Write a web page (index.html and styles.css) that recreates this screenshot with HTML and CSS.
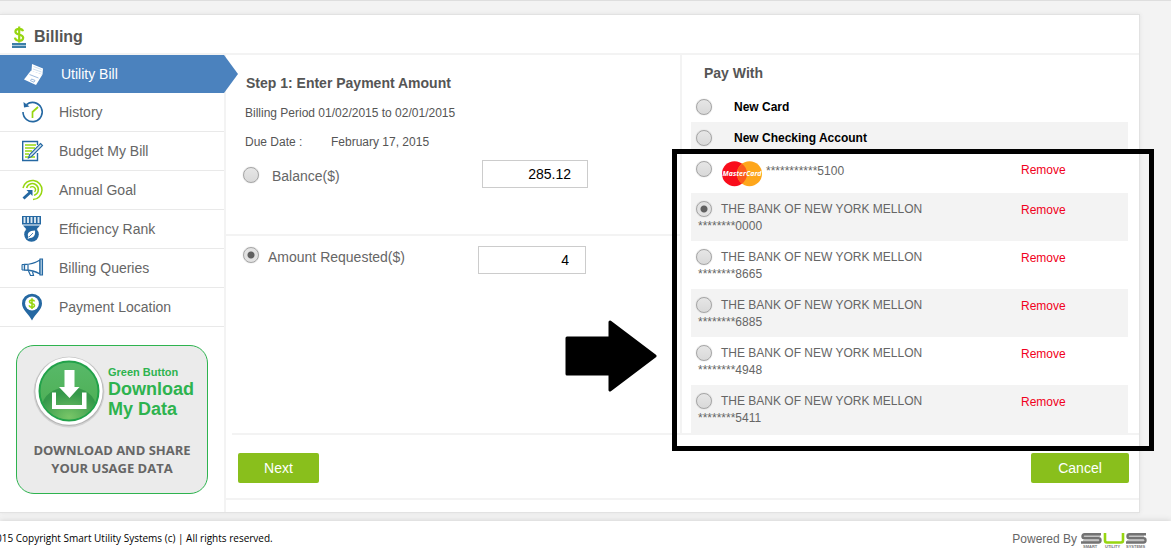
FILE: index.html
```html
<!DOCTYPE html>
<html lang="en">
<head>
<meta charset="utf-8">
<title>Billing</title>
<link rel="stylesheet" href="styles.css">
</head>
<body>
<div class="panel">
  <header class="panel-header">
    <svg class="title-icon" width="14" height="22" viewBox="0 0 14 22" aria-hidden="true">
      <path d="M11 5.2C10.500 3.200 9 2.800 7.200 2.800C4.800 2.800 3.400 4 3.400 5.700C3.400 9.600 11.200 7.400 11.200 11.800C11.200 13.700 9.500 14.800 7.300 14.800C5 14.800 3.300 13.800 2.900 11.600M7.200.5V16.500" fill="none" stroke="#97d610" stroke-width="2.200"/>
      <path d="M0 18h14M0 21h14" stroke="#3d7fa8" stroke-width="2"/>
      <path d="M0 19.500h14" stroke="#a5c6da" stroke-width="1"/>
    </svg>
    <h1>Billing</h1>
  </header>
  <div class="panel-body">
    <aside class="sidebar">
      <nav>
        <a class="nav-item active" href="#">
          <svg class="nav-icon" width="24" height="28" viewBox="0 0 24 28" aria-hidden="true">
            <path d="M11 4L22 8.500L21.500 14.500L10.500 11Z" fill="#fff"/>
            <path d="M10 10.500L21.500 14.500L15 25L3 19.500Z" fill="#fff"/>
            <path d="M12.500 6.500l8 3M12 9l8.500 3" stroke="#c3d5ea" stroke-width=".8"/>
            <path d="M8.500 14.500l9 3.500M10.500 19l3.500 1.400l-1 1.800l-3.500-1.500z" fill="none" stroke="#86abd6" stroke-width=".8"/>
          </svg>
          <span>Utility Bill</span>
          <svg class="nav-tip" width="14" height="38" viewBox="0 0 14 38" aria-hidden="true"><path d="M0 0L14 19L0 38Z" fill="#4b82be"/></svg>
        </a>
        <a class="nav-item" href="#">
          <svg class="nav-icon" width="24" height="28" viewBox="0 0 24 28" aria-hidden="true">
            <path d="M5.500 6.600A9.600 9.600 0 1 1 2 14" fill="none" stroke="#2568a2" stroke-width="1.600"/>
            <path d="M2.500 4L3 9.500L8.500 8.500Z" fill="#2568a2"/>
            <path d="M17 9L11.500 14V20" fill="none" stroke="#97d610" stroke-width="1.700"/>
          </svg>
          <span>History</span>
        </a>
        <a class="nav-item" href="#">
          <svg class="nav-icon" width="24" height="28" viewBox="0 0 24 28" aria-hidden="true">
            <path d="M16.500 8V4.500H1.700V23.500H16.500V16" fill="none" stroke="#2568a2" stroke-width="1.400"/>
            <path d="M4 8h11M4 11h10M4 14h7M4 17h4M4 20h10" stroke="#97d610" stroke-width="1.400"/>
            <path d="M19.500 6.500l2 2L10.500 19.500L7.500 21l1.200-3.500z" fill="#d3e3ef" stroke="#2568a2" stroke-width="1.100"/>
          </svg>
          <span>Budget My Bill</span>
        </a>
        <a class="nav-item" href="#">
          <svg class="nav-icon" width="24" height="28" viewBox="0 0 24 28" aria-hidden="true">
            <path d="M2 12A9.600 9.600 0 1 1 12 23.600M5.600 12A6 6 0 1 1 13 19.400" fill="none" stroke="#97d610" stroke-width="1.500"/>
            <path d="M9 11.500A3 3 0 1 1 13.500 16" fill="none" stroke="#97d610" stroke-width="1.300"/>
            <path d="M5.500 14H11.500V20L9.500 18L3.500 23.500L1.500 21.500L7.500 16Z" fill="#2568a2"/>
          </svg>
          <span>Annual Goal</span>
        </a>
        <a class="nav-item" href="#">
          <svg class="nav-icon" width="24" height="28" viewBox="0 0 24 28" aria-hidden="true">
            <path d="M1 1H20V9.500H1Z" fill="#2568a2"/>
            <path d="M3.500 2v6M7 2v6M10.500 2v6M14 2v6M17.500 2v6" stroke="#dce8f1" stroke-width="1.900"/>
            <path d="M2 10.500H19L15 15H6Z" fill="#2568a2"/>
            <circle cx="10.500" cy="19.500" r="7.300" fill="#2568a2"/>
            <path d="M14 15.500C8 15.500 5.500 18.500 7.500 22L6.500 24L9 23C13.500 23 14.500 19 14 15.500Z" fill="#fff"/>
            <path d="M8 22L12 18" stroke="#2568a2" stroke-width=".8"/>
          </svg>
          <span>Efficiency Rank</span>
        </a>
        <a class="nav-item" href="#">
          <svg class="nav-icon" width="24" height="28" viewBox="0 0 24 28" aria-hidden="true">
            <path d="M3.500 10.500C9 10.500 14 9 19 6V20C14 17 9 16 3.500 16Z" fill="none" stroke="#2568a2" stroke-width="1.300"/>
            <path d="M1 10.500h2.500v5.500H1z" fill="#c3d8e8" stroke="#2568a2" stroke-width="1"/>
            <path d="M19 5h2.500v16H19z" fill="#a9c7dd" stroke="#2568a2" stroke-width="1.100"/>
            <path d="M7.500 17L9.500 21.500H12.500L11.500 17.500M7 11v5" fill="none" stroke="#2568a2" stroke-width="1.200"/>
          </svg>
          <span>Billing Queries</span>
        </a>
        <a class="nav-item" href="#">
          <svg class="nav-icon" width="24" height="28" viewBox="0 0 24 28" aria-hidden="true">
            <path d="M11 27.500C8 21 1 17 1 10.500A10 9.800 0 0 1 21 10.500C21 17 14 21 11 27.500Z" fill="#2568a2"/>
            <circle cx="11" cy="10.500" r="6.900" fill="#fff"/>
            <path d="M13.500 8.500C13 6.500 8.500 6.500 8.500 8.800C8.500 11 13.500 10 13.500 12.500C13.500 15 8.500 14.800 8.300 12.300M11 5.300V16" fill="none" stroke="#97d610" stroke-width="1.600"/>
          </svg>
          <span>Payment Location</span>
        </a>
      </nav>
      <a class="download" href="#">
        <span class="download-top">
          <svg width="72" height="72" viewBox="0 0 72 72" aria-hidden="true">
            <defs>
              <linearGradient id="ball" x1="0" y1="0" x2="0" y2="1"><stop offset="0" stop-color="#58b969"/><stop offset="1" stop-color="#4bad50"/></linearGradient>
              <radialGradient id="glow" cx=".5" cy=".75" r=".6"><stop offset="0" stop-color="#79c668"/><stop offset="1" stop-color="#35984a"/></radialGradient>
              <clipPath id="disc"><circle cx="36" cy="35" r="28.500"/></clipPath>
            </defs>
            <circle cx="36" cy="36" r="35.500" fill="#d2d2d2"/>
            <circle cx="36" cy="35.500" r="34.500" fill="#b5b5b5"/>
            <circle cx="36" cy="35" r="33.700" fill="#fff"/>
            <circle cx="36" cy="35" r="29.500" fill="url(#ball)" stroke="#22a24a" stroke-width="2"/>
            <ellipse cx="36" cy="51" rx="27" ry="20" fill="url(#glow)" clip-path="url(#disc)"/>
            <path d="M31.500 14H41.500V31H46.500L36.500 42L26 31H31.500Z" fill="#fff"/>
            <path d="M19 36.500H23V49H49V36.500H53.500V53H19Z" fill="#fff"/>
          </svg>
          <span class="download-name"><small>Green Button</small><strong>Download<br>My Data</strong></span>
        </span>
        <span class="download-text">DOWNLOAD AND SHARE<br>YOUR USAGE DATA</span>
      </a>
    </aside>
    <main class="main">
      <form class="payment">
        <div class="columns">
          <section class="amount">
            <div class="amount-current">
              <h2>Step 1: Enter Payment Amount</h2>
              <p>Billing Period 01/02/2015 to 02/01/2015</p>
              <p class="due"><span>Due Date :</span><span>February 17, 2015</span></p>
              <div class="field">
                <input type="radio" name="amount" id="balance">
                <label for="balance">Balance($)</label>
                <input class="money" type="text" value="285.12" aria-label="Balance amount">
              </div>
            </div>
            <div class="amount-other">
              <div class="field requested">
                <input type="radio" name="amount" id="requested" checked>
                <label for="requested">Amount Requested($)</label>
                <input class="money" type="text" value="4" aria-label="Requested amount">
              </div>
            </div>
            <svg class="arrow" width="92" height="72" viewBox="0 0 92 72" aria-hidden="true"><path d="M2 18H45V2L90 36L45 70V54H2Z" stroke="#000" stroke-width="3" stroke-linejoin="round"/></svg>
          </section>
          <section class="pay">
            <h2>Pay With</h2>
            <ul class="methods">
              <li class="new"><input type="radio" name="method" id="m1"><label for="m1">New Card</label></li>
              <li class="new"><input type="radio" name="method" id="m2"><label for="m2">New Checking Account</label></li>
              <li class="card">
                <input type="radio" name="method" id="m3">
                <label for="m3">
                  <svg width="40" height="26" viewBox="0 0 40 26" aria-hidden="true">
                    <circle cx="12.500" cy="12.700" r="12.500" fill="#f90d1b"/>
                    <circle cx="27.500" cy="12.700" r="12.500" fill="#fea61b"/>
                    <path d="M20 2.700A12.500 12.500 0 0 1 20 22.700A12.500 12.500 0 0 1 20 2.700Z" fill="#fb5a1c"/>
                    <text class="card-brand" x="20" y="15" text-anchor="middle">MasterCard</text>
                  </svg>
                  <span>***********5100</span>
                </label>
                <a class="remove" href="#">Remove</a>
              </li>
              <li><input type="radio" name="method" id="m4" checked><label for="m4">THE BANK OF NEW YORK MELLON</label><a class="remove" href="#">Remove</a><span class="digits">********0000</span></li>
              <li><input type="radio" name="method" id="m5"><label for="m5">THE BANK OF NEW YORK MELLON</label><a class="remove" href="#">Remove</a><span class="digits">********8665</span></li>
              <li><input type="radio" name="method" id="m6"><label for="m6">THE BANK OF NEW YORK MELLON</label><a class="remove" href="#">Remove</a><span class="digits">********6885</span></li>
              <li><input type="radio" name="method" id="m7"><label for="m7">THE BANK OF NEW YORK MELLON</label><a class="remove" href="#">Remove</a><span class="digits">********4948</span></li>
              <li><input type="radio" name="method" id="m8"><label for="m8">THE BANK OF NEW YORK MELLON</label><a class="remove" href="#">Remove</a><span class="digits">********5411</span></li>
            </ul>
            <div class="highlight"></div>
          </section>
        </div>
        <div class="actions">
          <button type="button" class="next">Next</button>
          <button type="button" class="cancel">Cancel</button>
        </div>
      </form>
    </main>
  </div>
</div>
<footer class="footer">
  <p class="copyright">015 Copyright Smart Utility Systems (c) | All rights reserved.</p>
  <p class="powered">Powered By
    <svg width="66" height="16" viewBox="0 0 66 16" role="img" aria-label="SUS">
      <path d="M2 3h17M2 8h17" stroke="#c4c4c4" stroke-width="2"/>
      <path d="M46 3h17M46 8h17" stroke="#c4c4c4" stroke-width="2"/>
      <path d="M20 1.300H3.500Q1.500 1.300 1.500 3.300Q1.500 5.300 3.500 5.300H17.500Q19.500 5.300 19.500 7.300Q19.500 9.500 17.500 9.500H0" fill="none" stroke="#737373" stroke-width="2.400"/>
      <path d="M24 0V7.500Q24 9.500 26 9.500H40Q42 9.500 42 7.500V0" fill="none" stroke="#97d610" stroke-width="2.600"/>
      <path d="M65 1.300H48.500Q46.500 1.300 46.500 3.300Q46.500 5.300 48.500 5.300H62.500Q64.500 5.300 64.500 7.300Q64.500 9.500 62.500 9.500H45" fill="none" stroke="#737373" stroke-width="2.400"/>
      <text class="logo-caption" x="2" y="15">SMART</text>
      <text class="logo-caption" x="24" y="15">UTILITY</text>
      <text class="logo-caption" x="45" y="15">SYSTEMS</text>
    </svg>
  </p>
</footer>
</body>
</html>
```
FILE: styles.css
```css
* { box-sizing: border-box; }
body {
  margin: 0;
  min-height: 100vh;
  display: flex;
  flex-direction: column;
  border-top: 1px solid #dedede;
  background: #f3f3f3;
  color: #666;
  font: 13px/17px "Liberation Sans", Arial, sans-serif;
  overflow-x: hidden;
}
h1, h2, p, ul { margin: 0; padding: 0; }
ul { list-style: none; }
a { text-decoration: none; }

.panel {
  margin: 13px 31px 8px 0;
  background: #fff;
  border: 1px solid #e2e2e2;
  border-left: 0;
  box-shadow: 0 0 4px #e2e2e2;
}
.panel-header {
  display: flex;
  align-items: center;
  gap: 8px;
  height: 40px;
  padding: 6px 12px 0;
  border-bottom: 2px solid #f3f3f3;
}
h1 { font-size: 16px; line-height: 20px; color: #555; }
.panel-body { display: flex; }

.sidebar {
  flex: 0 0 226px;
  border-right: 2px solid #f3f3f3;
}
.nav-item {
  position: relative;
  display: flex;
  align-items: center;
  gap: 14px;
  height: 39px;
  padding-left: 21px;
  border-bottom: 1px solid #e9e9e9;
  color: #666;
  font-size: 14px;
}
.nav-icon { flex: none; }
.nav-item.active {
  height: 38px;
  gap: 16px;
  border-bottom: 0;
  background: #4b82be;
  color: #fff;
}
.nav-tip { position: absolute; left: 100%; top: 0; }

.download {
  display: block;
  width: 192px;
  margin: 18px 0 18px 16px;
  padding: 10px 16px 16px;
  border: 1px solid #2eb34f;
  border-radius: 18px;
  background: #ebebeb;
}
.download-top { display: flex; align-items: center; gap: 3px; }
.download-top svg { flex: none; }
.download-name { color: #2eb34f; font-weight: bold; white-space: nowrap; }
.download-name small { display: block; font-size: 11px; line-height: 14px; }
.download-name strong { display: block; font-size: 18px; line-height: 20px; }
.download-text {
  display: block;
  margin-top: 13px;
  color: #666;
  font: bold 13px/18px "Open Sans", "Noto Sans", sans-serif;
  text-align: center;
  white-space: nowrap;
}

.main { flex: 1; min-width: 0; }
.payment { padding-bottom: 11px; }
.columns { display: flex; border-bottom: 2px solid #f3f3f3; margin-left: 6px; }
.amount { position: relative; flex: 1; margin-left: -6px; }
.amount-current {
  height: 181px;
  padding: 19px 19px 0;
  border-bottom: 2px solid #f3f3f3;
}
h2 { font-size: 14px; line-height: 18px; color: #555; }
.amount h2 { margin-bottom: 14px; padding-left: 1px; }
.amount p { font-size: 12px; line-height: 15px; margin-bottom: 14px; color: #555; }
.due { display: flex; }
.due span:first-child { flex: 0 0 86px; }
.field { display: flex; font-size: 14px; line-height: 18px; }
.field label { padding-top: 7px; margin-left: 13px; }
.money {
  width: 106px;
  height: 28px;
  margin-left: auto;
  margin-right: 73px;
  padding: 0 16px;
  border: 1px solid #ccc;
  background: #fff;
  color: #000;
  font: 14px "Liberation Sans", Arial, sans-serif;
  text-align: right;
}
.field input[type="radio"] { margin-top: 7px; margin-left: -2px; }
.amount .field { margin-top: -4px; }
.amount-other { padding: 14px 19px 0; }
.amount-other label { margin-left: 9px; padding-top: 2px; }
.amount-other input[type="radio"] { margin-top: 1px; }
.amount-other .money { width: 108px; margin-right: 75px; }
.arrow { position: absolute; right: 23px; bottom: 41px; }

input[type="radio"] {
  appearance: none;
  flex: none;
  width: 16px;
  height: 16px;
  margin: 0;
  border: 1px solid #a5a5a5;
  border-radius: 50%;
  background: linear-gradient(#e6e6e6, #d9d9d9);
  box-shadow: 0 0 1px #aaa;
}
input[type="radio"]:checked {
  background: radial-gradient(circle, #606060 0 3px, #e2e2e2 4px);
}

.pay {
  position: relative;
  flex: 0 0 459px;
  border-left: 2px solid #f3f3f3;
  padding: 9px 11px 0 9px;
}
.pay h2 { margin-left: 13px; margin-bottom: 9px; }
.methods { margin-bottom: -2px; }
.methods li {
  display: grid;
  grid-template-columns: 16px 1fr 107px;
  column-gap: 9px;
  align-content: start;
  height: 48px;
  padding: 8px 0 0 5px;
  font-size: 12px;
  line-height: 17px;
}
.methods li:nth-child(even) { background: #f3f3f3; }
.methods li:last-child { height: 50px; }
.methods .new {
  column-gap: 22px;
  height: 31px;
  font-weight: bold;
  color: #000;
}
.methods .card { height: 40px; }
.card label { display: flex; gap: 4px; height: 26px; }
.card label span { padding-top: 2px; }
.card svg { flex: none; margin-left: 1px; }
.card-brand { font: italic bold 7px "Noto Sans", sans-serif; fill: #fff; }
.remove { color: #f10020; font-size: 12px; padding-top: 1px; }
.digits { grid-column: 1 / -1; padding-left: 2px; margin-top: -1px; }
.highlight {
  position: absolute;
  inset: 94px -15px -18px -10px;
  border: 5px solid #000;
  pointer-events: none;
}

.actions {
  display: flex;
  justify-content: space-between;
  padding: 18px 10px 15px 12px;
  border-bottom: 2px solid #f3f3f3;
}
button {
  height: 30px;
  border: 0;
  border-radius: 2px;
  background: #89bf1c;
  color: #fff;
  font: 14px "Liberation Sans", Arial, sans-serif;
}
.next { width: 81px; }
.cancel { width: 98px; }

.footer {
  flex: 1;
  display: flex;
  justify-content: space-between;
  align-items: flex-start;
  padding: 9px 24px 0 0;
  background: #fff;
  box-shadow: 0 0 6px #ccc;
}
.copyright {
  margin-left: -4px;
  color: #000;
  font: 10px/17px "Open Sans", "Noto Sans", sans-serif;
  white-space: nowrap;
}
.powered { display: flex; gap: 4px; font-size: 12px; line-height: 19px; }
.powered svg { margin-top: 3px; }
.logo-caption { font: bold 4px "Liberation Sans", Arial, sans-serif; fill: #777; }
```
